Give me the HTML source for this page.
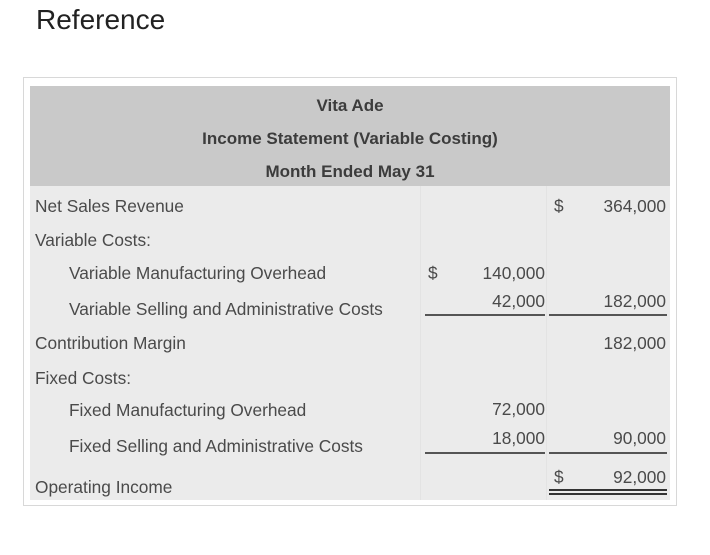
<!DOCTYPE html>
<html><head><style>
body{margin:0;width:710px;height:555px;background:#fff;position:relative;font-family:"Liberation Sans",sans-serif;color:#4a4a4a;overflow:hidden}
.t{position:absolute;font-size:17.3px;line-height:20px;white-space:nowrap}
.r{text-align:right}
.h{font-weight:bold;color:#3c3c3c;width:640px;left:30px;text-align:center;font-size:17px}
.l{position:absolute;background:#555}
</style></head><body>
<div class="t" style="left:36px;top:4px;font-size:28px;line-height:32px;color:#222">Reference</div>
<div style="position:absolute;left:23px;top:77px;width:652px;height:427px;border:1px solid #d8d8d8"></div>
<div style="position:absolute;left:30px;top:86px;width:640px;height:100px;background:#c9c9c9"></div>
<div style="position:absolute;left:30px;top:186px;width:640px;height:314px;background:#ebebeb"></div>
<div style="position:absolute;left:420px;top:186px;width:1px;height:314px;background:#e3e3e3"></div>
<div style="position:absolute;left:546px;top:186px;width:1px;height:314px;background:#e3e3e3"></div>
<div class="t h" style="top:96px">Vita Ade</div>
<div class="t h" style="top:129px">Income Statement (Variable Costing)</div>
<div class="t h" style="top:162px">Month Ended May 31</div>
<div class="t" style="left:35px;top:196px">Net Sales Revenue</div>
<div class="t" style="left:35px;top:230px">Variable Costs:</div>
<div class="t" style="left:69px;top:263px">Variable Manufacturing Overhead</div>
<div class="t" style="left:69px;top:299px">Variable Selling and Administrative Costs</div>
<div class="t" style="left:35px;top:333px">Contribution Margin</div>
<div class="t" style="left:35px;top:368px">Fixed Costs:</div>
<div class="t" style="left:69px;top:400px">Fixed Manufacturing Overhead</div>
<div class="t" style="left:69px;top:436px">Fixed Selling and Administrative Costs</div>
<div class="t" style="left:35px;top:477px">Operating Income</div>
<div class="t" style="left:554px;top:196px">$</div>
<div class="t r" style="right:44px;top:196px">364,000</div>
<div class="t" style="left:428px;top:263px">$</div>
<div class="t r" style="right:165px;top:263px">140,000</div>
<div class="t r" style="right:165px;top:291px">42,000</div>
<div class="l" style="left:425px;top:314px;width:120px;height:2px"></div>
<div class="t r" style="right:44px;top:291px">182,000</div>
<div class="l" style="left:549px;top:314px;width:118px;height:2px"></div>
<div class="t r" style="right:44px;top:333px">182,000</div>
<div class="t r" style="right:165px;top:399px">72,000</div>
<div class="t r" style="right:165px;top:428px">18,000</div>
<div class="l" style="left:425px;top:452px;width:120px;height:2px"></div>
<div class="t r" style="right:44px;top:428px">90,000</div>
<div class="l" style="left:549px;top:452px;width:118px;height:2px"></div>
<div class="t" style="left:554px;top:467px">$</div>
<div class="t r" style="right:44px;top:467px">92,000</div>
<div class="l" style="left:549px;top:489px;width:118px;height:2px;background:#333"></div>
<div class="l" style="left:549px;top:493px;width:118px;height:2px;background:#333"></div>
</body></html>
